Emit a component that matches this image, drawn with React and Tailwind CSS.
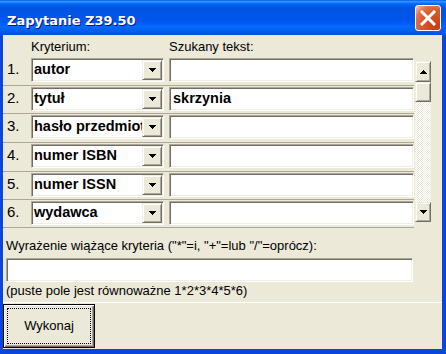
import React from 'react';

const sunken =
  'border border-t-[#aca899] border-l-[#aca899] border-b-white border-r-white shadow-[inset_1px_1px_0_#716f64,inset_-1px_-1px_0_#f1efe2]';
const raised =
  'bg-[#ece9d8] border border-t-[#f1efe2] border-l-[#f1efe2] border-b-[#716f64] border-r-[#716f64] shadow-[inset_1px_1px_0_#ffffff,inset_-1px_-1px_0_#aca899]';

const rows = [
  { n: '1.', field: 'autor', text: '', h: 'h-[29px]' },
  { n: '2.', field: 'tytuł', text: 'skrzynia', h: 'h-[28px]' },
  { n: '3.', field: 'hasło przedmiotowe', text: '', h: 'h-[29px]' },
  { n: '4.', field: 'numer ISBN', text: '', h: 'h-[29px]' },
  { n: '5.', field: 'numer ISSN', text: '', h: 'h-[28px]' },
  { n: '6.', field: 'wydawca', text: '', h: 'h-[28px]' },
];

// small black pixel triangle used on the dropdown and scroll buttons
const Arrow = ({ up = false }) => {
  const steps = [
    [0, 7],
    [1, 5],
    [2, 3],
    [3, 1],
  ];
  return (
    <svg width="7" height="4" viewBox="0 0 7 4" className="block" shapeRendering="crispEdges">
      {steps.map(([i, w]) => (
        <rect key={i} x={i} y={up ? 3 - i : i} width={w} height="1" fill="#000" />
      ))}
    </svg>
  );
};

const App = () => {
  return (
    <div
      className="w-[446px] h-[354px] flex flex-col bg-[#0b46dc] overflow-hidden text-black"
      style={{ fontFamily: '"Liberation Sans", Arial, sans-serif' }}
    >
      {/* Title bar */}
      <div className="h-[35px] shrink-0 flex items-start justify-between pl-[7px] pr-[5px] bg-[linear-gradient(180deg,#0058ee_0%,#3593ff_4%,#288eff_6%,#127dff_8%,#036ffc_10%,#0262ee_14%,#0057e5_20%,#0054e3_24%,#0055eb_56%,#005bf5_66%,#026afe_76%,#0062ef_86%,#0058e6_94%,#004fd0_100%)]">
        <span
          className="pt-[13px] text-[13px] leading-[15px] font-bold text-white [text-shadow:1px_1px_0_#0f1089]"
          style={{ fontFamily: '"DejaVu Sans", sans-serif' }}
        >
          Zapytanie Z39.50
        </span>
        <div className="mt-[5px] w-[26px] h-[26px] rounded-[3px] border border-white bg-[radial-gradient(circle_at_85%_85%,#c73d16_0%,#dc5a2e_55%,#e2744c_75%,#f3b8a0_95%)] flex items-center justify-center">
          <svg width="16" height="16" viewBox="0 0 16 16">
            <path d="M2 2 L14 14 M14 2 L2 14" stroke="#fff" strokeWidth="3" strokeLinecap="square" />
          </svg>
        </div>
      </div>

      {/* Client area */}
      <div className="flex-1 ml-[3px] mr-[4px] mb-[5px] bg-[#ece9d8] flex flex-col">
        <div className="flex">
          <div className="w-[411px] flex flex-col">
            {/* Header */}
            <div className="h-[22px] flex text-[13px] leading-[15px] pt-[4px]">
              <span className="pl-[28px] w-[166px]">Kryterium:</span>
              <span>Szukany tekst:</span>
            </div>

            {/* Criteria rows */}
            {rows.map((row) => (
              <div key={row.n} className={`${row.h} flex items-start border-b border-[#aca899]`}>
                <span className="w-[28px] pl-[4px] pt-[3px] text-[15px] leading-[17px]">{row.n}</span>
                <div className={`mt-[1px] w-[133px] h-[24px] p-[1px] flex bg-white ${sunken}`}>
                  <div className="flex-1 overflow-hidden whitespace-nowrap pl-[1px] pt-[1px] font-bold text-[14.5px] leading-[17px]">
                    {row.field}
                  </div>
                  <div className={`w-[20px] h-full flex items-center justify-center ${raised}`}>
                    <Arrow />
                  </div>
                </div>
                <div className={`mt-[1px] ml-[5px] flex-1 h-[24px] p-[1px] bg-white ${sunken}`}>
                  <div className="pl-[2px] pt-[1px] font-bold text-[14.5px] leading-[17px] whitespace-nowrap">
                    {row.text}
                  </div>
                </div>
              </div>
            ))}
          </div>

          {/* Scrollbar */}
          <div className="mt-[26px] ml-[1px] w-[16px] h-[161px] flex flex-col">
            <div className={`h-[21px] flex items-center justify-center ${raised}`}>
              <Arrow up />
            </div>
            <div className={`h-[20px] ${raised}`} />
            <div className="flex-1 bg-[repeating-conic-gradient(#ece9d8_0_25%,#ffffff_0_50%)] bg-[length:2px_2px]" />
            <div className={`h-[20px] flex items-center justify-center ${raised}`}>
              <Arrow />
            </div>
          </div>
        </div>

        {/* Expression */}
        <div className="mt-[10px] ml-[3px] text-[13px] leading-[15px]">
          Wyrażenie wiążące kryteria ("*"=i, "+"=lub "/"=oprócz):
        </div>
        <div className={`mt-[5px] ml-[3px] w-[407px] h-[24px] bg-white ${sunken}`} />
        <div className="mt-[1px] ml-[3px] text-[13px] leading-[15px]">
          (puste pole jest równoważne 1*2*3*4*5*6)
        </div>

        {/* Button bar */}
        <div className="mt-[4px] border-t border-white">
          <button
            type="button"
            className="mt-[1px] w-[92px] h-[44px] p-[3px] bg-[#ece9d8] border border-black shadow-[inset_1px_1px_0_#ffffff,inset_-1px_-1px_0_#716f64,inset_-2px_-2px_0_#aca899]"
          >
            <div className="w-full h-full border border-dotted border-black flex items-center justify-center text-[13px]">
              Wykonaj
            </div>
          </button>
        </div>
      </div>
    </div>
  );
};

export default App;
